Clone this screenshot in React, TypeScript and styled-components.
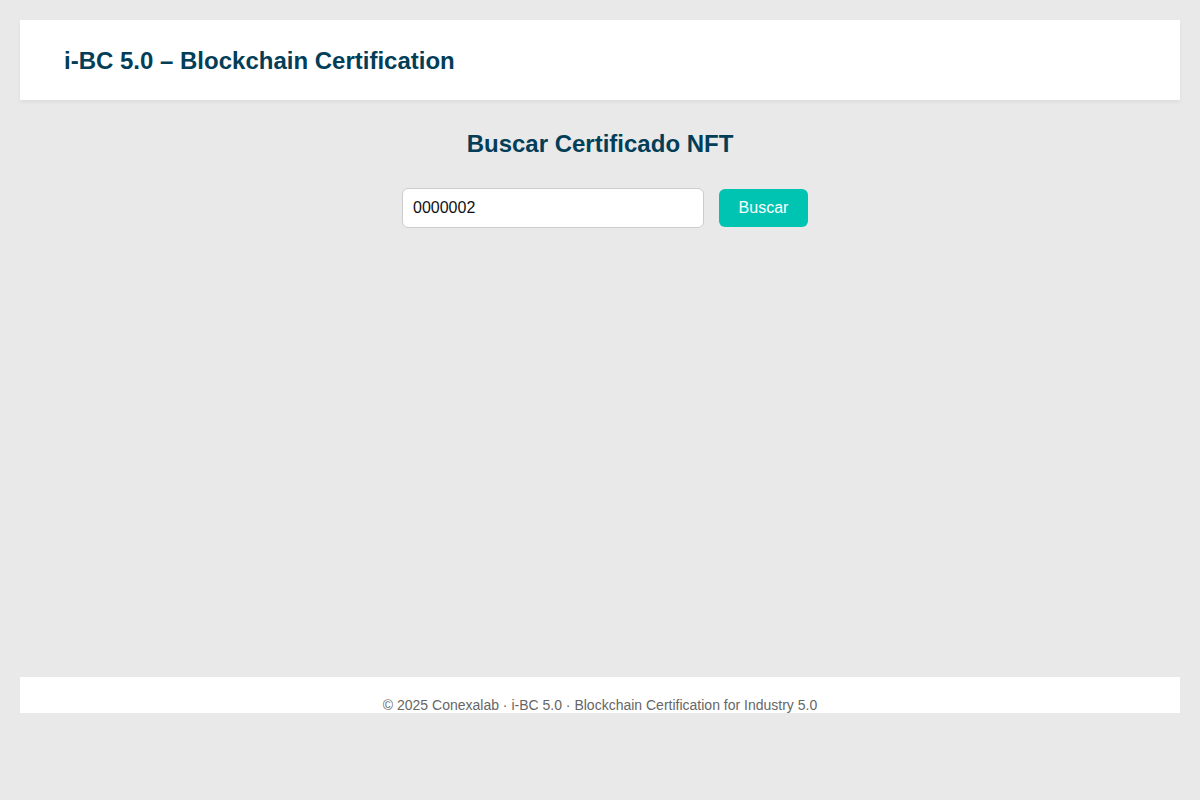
import React, { useState } from "react";
import styled, { createGlobalStyle } from "styled-components";

const GlobalStyle = createGlobalStyle`
  html, body { margin: 0; padding: 0; }
  body {
    background: #e9e9e9;
    font-family: "Liberation Sans", Arial, sans-serif;
  }
`;

const Page = styled.div`
  padding: 20px 20px 0;
  display: flex;
  flex-direction: column;
  min-height: 693px;
`;

const Header = styled.header`
  box-sizing: border-box;
  background: #ffffff;
  height: 80px;
  display: flex;
  align-items: center;
  padding: 2px 44px 0;
  box-shadow: 0 2px 4px rgba(0, 0, 0, 0.06);
`;

const Title = styled.h1`
  margin: 0;
  font-size: 24px;
  font-weight: 700;
  color: #033e58;
`;

const Main = styled.main`
  flex: 1;
  display: flex;
  flex-direction: column;
  align-items: center;
  padding-top: 30px;
`;

const Heading = styled.h2`
  margin: 0;
  font-size: 24px;
  line-height: 28px;
  font-weight: 700;
  color: #033e58;
`;

const SearchRow = styled.form`
  display: flex;
  align-items: center;
  gap: 15px;
  margin-top: 30px;
  padding-left: 10px;
`;

const Input = styled.input`
  box-sizing: border-box;
  width: 302px;
  height: 40px;
  padding: 0 10px;
  border: 1px solid #cccccc;
  border-radius: 6px;
  background: #ffffff;
  font-family: "Liberation Sans", Arial, sans-serif;
  font-size: 16px;
  color: #111;
  outline: none;
`;

const Button = styled.button`
  box-sizing: border-box;
  width: 89px;
  height: 38px;
  border: none;
  border-radius: 6px;
  background: #00c4b2;
  color: #ffffff;
  font-family: "Liberation Sans", Arial, sans-serif;
  font-size: 16px;
  cursor: pointer;
`;

const Footer = styled.footer`
  box-sizing: border-box;
  background: #ffffff;
  height: 36px;
  overflow: hidden;
  padding-top: 20px;
  text-align: center;
  font-size: 14px;
  color: #666666;
`;

export default function App() {
  const [value, setValue] = useState("0000002");
  return (
    <>
      <GlobalStyle />
      <Page>
        <Header>
          <Title>i-BC 5.0 – Blockchain Certification</Title>
        </Header>
        <Main>
          <Heading>Buscar Certificado NFT</Heading>
          <SearchRow onSubmit={(e) => e.preventDefault()}>
            <Input value={value} onChange={(e) => setValue(e.target.value)} />
            <Button type="submit">Buscar</Button>
          </SearchRow>
        </Main>
        <Footer>© 2025 Conexalab · i-BC 5.0 · Blockchain Certification for Industry 5.0</Footer>
      </Page>
    </>
  );
}
